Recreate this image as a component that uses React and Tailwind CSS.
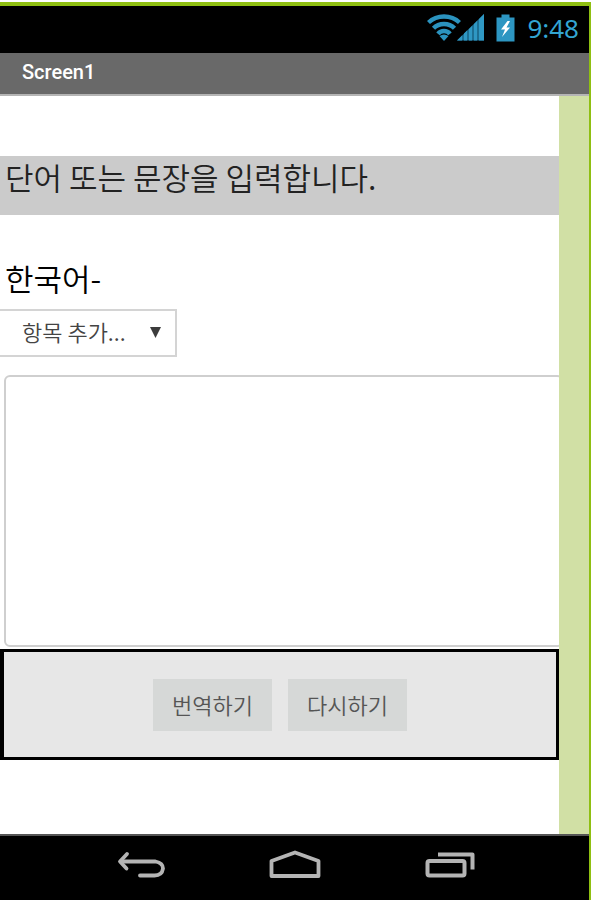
import { useState } from 'react';

function StatusBar() {
  return (
    <div className="flex h-[47px] items-center justify-end bg-black pr-[10px] pb-1 text-[#33a5d2]">
      {/* Wifi */}
      <svg className="h-[27px] w-[34px]" viewBox="0 0 34 27" fill="none" stroke="#2b93bf" strokeWidth="4.400">
        <path d="M1.500 8.500C10 0.500 24 0.500 32.500 8.500" />
        <path d="M6.500 14.300C12 8.500 22 8.500 27.500 14.300" />
        <path d="M11 19.800C14 16 20 16 23 19.800" />
        <path d="M17 27l-4.500-5q4.500-3 9 0z" fill="#2b93bf" stroke="none" />
      </svg>
      {/* Signal */}
      <svg className="-ml-1 h-[27px] w-[27px]" viewBox="0 0 27 27">
        <path d="M0 26.500L27 0v26.500z" fill="#1d6f93" />
        <path d="M0 26.500l5-5v5zM7 26.500v-7l3-3v10zM12 26.500V15l3-3v14.500zM17 26.500V10l3-3v19.500zM22 26.500V5l5-5v26.500z" fill="#2f98c4" />
      </svg>
      {/* Battery */}
      <svg className="ml-3 h-[28px] w-[19px]" viewBox="0 0 19 28">
        <path d="M5.500 0.500h8v3H18.500v24H0.500V3.500h5z" fill="#2d96c2" />
        <path d="M11.500 7L5 15.500h4l-3 7.500 8-9.500h-3.500L14 7z" fill="#fff" />
      </svg>
      <span className="ml-3 font-['Noto_Sans',sans-serif] text-[26px] leading-[30px]">9:48</span>
    </div>
  );
}

function NavBar() {
  return (
    <nav className="flex h-[66px] items-start justify-center gap-[102px] border-t-2 border-[#555] bg-black pt-[14px]">
      <button type="button" aria-label="Back">
        <svg className="h-8 w-[52px]" viewBox="0 0 52 32" fill="none" stroke="#b4b4b4" strokeWidth="3.800" strokeLinecap="round" strokeLinejoin="round">
          <path d="M12 4L5 11.500L11.500 18.500" />
          <path d="M6 11.500H40.500Q48 13 48 18.500Q47 25.500 39.500 25.500H25" />
        </svg>
      </button>
      <button type="button" aria-label="Home">
        <svg className="h-8 w-[52px]" viewBox="0 0 52 32" fill="none" stroke="#b4b4b4" strokeWidth="3.800" strokeLinejoin="round">
          <path d="M2.500 26V11L26 2.500L49.500 11V26z" />
        </svg>
      </button>
      <button type="button" aria-label="Recent apps">
        <svg className="h-8 w-[52px]" viewBox="0 0 52 32" fill="none" stroke="#b4b4b4" strokeWidth="4" strokeLinejoin="round">
          <rect x="4.500" y="11" width="37" height="14.500" rx="2" />
          <path d="M15 4.500H49.500V19.500" />
        </svg>
      </button>
    </nav>
  );
}

export default function App() {
  const [item, setItem] = useState('');
  const [text, setText] = useState('');

  return (
    <div className="min-h-screen bg-white pt-[2px] font-['Noto_Sans_CJK_KR',sans-serif]">
      <div className="flex min-h-[898px] flex-col border-t-4 border-r-2 border-[#8fbf12]">
        <StatusBar />
        <header className="h-[43px] border-b-2 border-[#b5b5b5] bg-[#696969] pl-[22px]">
          <h1 className="font-[Roboto,sans-serif] text-[20px] leading-[38px] font-medium text-white">Screen1</h1>
        </header>

        <div className="flex flex-1 bg-[#d1e0a5] pr-[30px]">
          <main className="min-w-0 flex-1 overflow-hidden bg-white pt-[60px]">
            <p className="h-[59px] bg-[#cbcbcb] pl-[5px] text-[31px] leading-[42px] font-[350] text-[#222]">
              단어 또는 문장을 입력합니다.
            </p>

            <label htmlFor="item" className="mt-[42px] block pl-[5px] text-[31px] leading-[42px] font-[350] text-black">
              한국어-
            </label>
            <div className="relative mt-[10px] w-[177px]">
              <select
                id="item"
                value={item}
                onChange={(e) => setItem(e.target.value)}
                className="block h-[48px] w-full appearance-none border-2 border-l-0 border-[#d4d4d4] bg-white pb-[3px] pl-[22px] text-[22px] font-[350] text-[#444]"
              >
                <option value="">항목 추가...</option>
              </select>
              <svg className="pointer-events-none absolute top-[18px] right-4 h-[11px] w-[11px]" viewBox="0 0 11 11">
                <path d="M0 0h11L5.500 11z" fill="#3c3c3c" />
              </svg>
            </div>

            <textarea
              aria-label="한국어"
              value={text}
              onChange={(e) => setText(e.target.value)}
              className="mt-[18px] ml-1 block h-[272px] w-full resize-none rounded-md border-2 border-[#cfcfcf] bg-white p-3 text-[22px] text-[#222] outline-none"
            />

            <div className="mt-[2px] flex h-[111px] items-center justify-center gap-4 border-3 border-l-4 border-black bg-[#e7e7e7]">
              <button type="button" className="h-[52px] w-[119px] bg-[#d6d8d7] text-[22px] font-[350] text-[#555]">
                번역하기
              </button>
              <button type="button" onClick={() => setText('')} className="h-[52px] w-[119px] bg-[#d6d8d7] text-[22px] font-[350] text-[#555]">
                다시하기
              </button>
            </div>
          </main>
        </div>

        <NavBar />
      </div>
    </div>
  );
}
